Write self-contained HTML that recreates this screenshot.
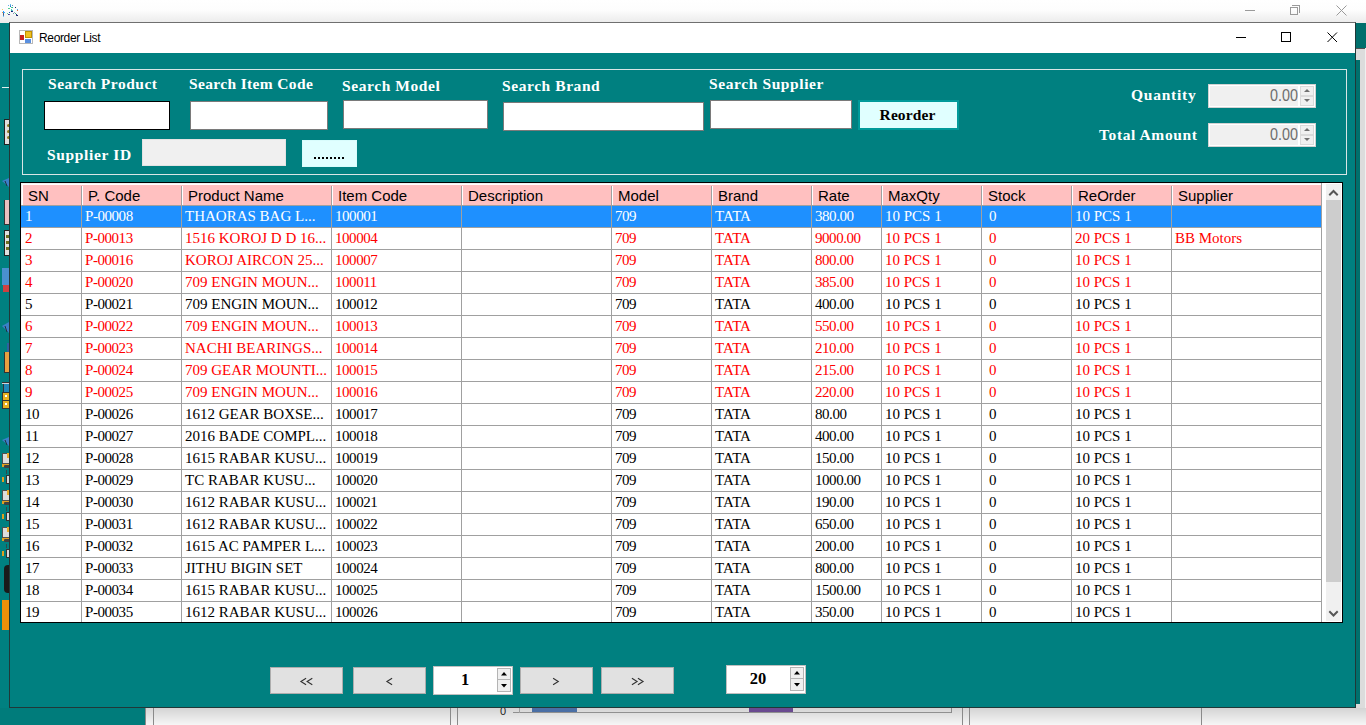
<!DOCTYPE html>
<html><head><meta charset="utf-8">
<style>
*{margin:0;padding:0;box-sizing:border-box}
html,body{width:1366px;height:725px;overflow:hidden;background:#fff;position:relative}
.a{position:absolute}
.lbl{position:absolute;font-family:"Liberation Serif",serif;font-weight:bold;color:#fff;font-size:15.5px;white-space:nowrap;line-height:1}
.hd{position:absolute;font-family:"Liberation Sans",sans-serif;font-size:15px;color:#000;white-space:nowrap;line-height:1}
.cell{position:absolute;font-family:"Liberation Serif",serif;font-size:15px;white-space:nowrap;line-height:1}
.btn{position:absolute;background:#e1e1e1;border:1px solid #adadad;font-family:"Liberation Sans",sans-serif;font-size:13px;color:#000;text-align:center}
</style></head><body>

<div class="a" style="left:0;top:0;width:1366px;height:23px;background:linear-gradient(#fff 0,#fdfdfd 10px,#ececec 22px)"></div>
<div class="a" style="left:2px;top:9px;width:1px;height:1px;background:#f0d070"></div>
<div class="a" style="left:2px;top:12px;width:1px;height:1px;background:#f09040"></div>
<div class="a" style="left:3px;top:11px;width:1px;height:1px;background:#20a0ff"></div>
<div class="a" style="left:3px;top:12px;width:1px;height:1px;background:#20a0ff"></div>
<div class="a" style="left:4px;top:12px;width:1px;height:1px;background:#40a8ff"></div>
<div class="a" style="left:3px;top:13px;width:1px;height:1px;background:#506080"></div>
<div class="a" style="left:3px;top:14px;width:1px;height:1px;background:#505878"></div>
<div class="a" style="left:3px;top:15px;width:1px;height:1px;background:#4080c0"></div>
<div class="a" style="left:3px;top:16px;width:1px;height:1px;background:#80c0f0"></div>
<div class="a" style="left:8px;top:5px;width:1px;height:1px;background:#60b0f0"></div>
<div class="a" style="left:10px;top:4px;width:1px;height:1px;background:#60c0e0"></div>
<div class="a" style="left:10px;top:5px;width:1px;height:1px;background:#50a0e0"></div>
<div class="a" style="left:10px;top:6px;width:1px;height:1px;background:#2070d0"></div>
<div class="a" style="left:11px;top:7px;width:1px;height:1px;background:#40d090"></div>
<div class="a" style="left:12px;top:7px;width:1px;height:1px;background:#30c080"></div>
<div class="a" style="left:12px;top:5px;width:1px;height:1px;background:#6090c0"></div>
<div class="a" style="left:15px;top:7px;width:1px;height:1px;background:#203070"></div>
<div class="a" style="left:8px;top:8px;width:1px;height:1px;background:#50d090"></div>
<div class="a" style="left:9px;top:8px;width:1px;height:1px;background:#50d090"></div>
<div class="a" style="left:11px;top:9px;width:1px;height:1px;background:#40d0b0"></div>
<div class="a" style="left:12px;top:10px;width:1px;height:1px;background:#60d0d0"></div>
<div class="a" style="left:11px;top:10px;width:1px;height:1px;background:#40b0b0"></div>
<div class="a" style="left:11px;top:11px;width:1px;height:1px;background:#102070"></div>
<div class="a" style="left:12px;top:11px;width:1px;height:1px;background:#203080"></div>
<div class="a" style="left:9px;top:12px;width:1px;height:1px;background:#2060b0"></div>
<div class="a" style="left:7px;top:13px;width:1px;height:1px;background:#60e0a0"></div>
<div class="a" style="left:8px;top:14px;width:1px;height:1px;background:#404890"></div>
<div class="a" style="left:9px;top:14px;width:1px;height:1px;background:#6050a0"></div>
<div class="a" style="left:13px;top:13px;width:1px;height:1px;background:#8090b0"></div>
<div class="a" style="left:14px;top:12px;width:1px;height:1px;background:#a0a8c0"></div>
<div class="a" style="left:15px;top:13px;width:1px;height:1px;background:#40c080"></div>
<div class="a" style="left:16px;top:14px;width:1px;height:1px;background:#203080"></div>
<div class="a" style="left:17px;top:15px;width:1px;height:1px;background:#102060"></div>
<div class="a" style="left:16px;top:15px;width:1px;height:1px;background:#304080"></div>
<div class="a" style="left:17px;top:9px;width:1px;height:1px;background:#60a8e0"></div>
<div class="a" style="left:17px;top:10px;width:1px;height:1px;background:#e07040"></div>
<div class="a" style="left:1245px;top:10px;width:10px;height:1px;background:#9a9a9a"></div>
<div class="a" style="left:1292px;top:5px;width:8px;height:8px;border:1px solid #9a9a9a;border-left:none;border-bottom:none"></div>
<div class="a" style="left:1290px;top:7px;width:8px;height:8px;border:1px solid #9a9a9a"></div>
<svg class="a" style="left:1336px;top:5px" width="11" height="11"><path d="M0.5 0.5L10.5 10.5M10.5 0.5L0.5 10.5" stroke="#9a9a9a" stroke-width="1"/></svg>
<div class="a" style="left:0;top:23px;width:10px;height:702px;background:#008080"></div>
<div class="a" style="left:2px;top:87px;width:7px;height:1px;background:#e0f0f0"></div>
<div class="a" style="left:4px;top:119px;width:6px;height:26px;background:#e0e0e0;border:1px solid #222;border-right:none"></div>
<div class="a" style="left:7px;top:124px;width:3px;height:3px;background:#8a7a20;border-radius:2px"></div>
<div class="a" style="left:7px;top:130px;width:3px;height:3px;background:#8a7a20;border-radius:2px"></div>
<div class="a" style="left:7px;top:136px;width:3px;height:3px;background:#8a7a20;border-radius:2px"></div>
<svg class="a" style="left:0;top:176px" width="10" height="12"><path d="M2 5 L9 2 L9 11 Z" fill="#3a80c8"/><path d="M5 5 L7 10" stroke="#203040" stroke-width="1"/></svg>
<div class="a" style="left:4px;top:200px;width:6px;height:25px;background:#e8c0c0;border-left:1px solid #333;border-bottom:1px solid #333"></div>
<div class="a" style="left:4px;top:230px;width:6px;height:26px;background:#e0e0e0;border:1px solid #222"></div>
<div class="a" style="left:6px;top:235px;width:3px;height:3px;background:#707020;"></div>
<div class="a" style="left:6px;top:241px;width:3px;height:3px;background:#707020;"></div>
<div class="a" style="left:6px;top:247px;width:3px;height:3px;background:#707020;"></div>
<div class="a" style="left:2px;top:268px;width:8px;height:17px;background:#4a90d0;"></div>
<div class="a" style="left:3px;top:285px;width:6px;height:7px;background:#d04040;"></div>
<svg class="a" style="left:0;top:320px" width="10" height="14"><path d="M2 6 L9 2 L9 13 Z" fill="#3a80c8"/><path d="M5 6 L7 12" stroke="#203040" stroke-width="1"/></svg>
<div class="a" style="left:7px;top:343px;width:3px;height:9px;background:#3060a0;"></div>
<div class="a" style="left:4px;top:352px;width:6px;height:21px;background:#e8a040;border-left:1px solid #333;border-bottom:1px solid #333"></div>
<div class="a" style="left:2px;top:382px;width:8px;height:2px;background:#d0d4d8;border-top:1px solid #333"></div>
<div class="a" style="left:3px;top:384px;width:7px;height:8px;background:#2088b8;border-left:1px solid #333"></div>
<div class="a" style="left:2px;top:392px;width:8px;height:17px;background:#e8b020;border:1px solid #333;border-right:none"></div>
<div class="a" style="left:2px;top:400px;width:8px;height:1px;background:#333;"></div>
<div class="a" style="left:5px;top:395px;width:2px;height:2px;background:#fff;"></div>
<div class="a" style="left:5px;top:403px;width:2px;height:2px;background:#fff;"></div>
<svg class="a" style="left:0;top:435px" width="10" height="12"><path d="M2 5 L9 2 L9 11 Z" fill="#3a80c8"/><path d="M5 5 L7 10" stroke="#203040" stroke-width="1"/></svg>
<div class="a" style="left:2px;top:453px;width:8px;height:11px;background:#dcdcdc;border:1px solid #505050;border-right:none"></div>
<div class="a" style="left:7px;top:453px;width:3px;height:5px;background:#e8a828;"></div>
<div class="a" style="left:2px;top:464px;width:8px;height:3px;background:#e0a020;"></div>
<div class="a" style="left:4px;top:465px;width:6px;height:3px;background:#404040;border-radius:1px"></div>
<div class="a" style="left:6px;top:470px;width:1px;height:4px;background:#304848;"></div>
<div class="a" style="left:6px;top:475px;width:4px;height:9px;background:#d8d8d8;border:1px solid #333;border-right:none"></div>
<div class="a" style="left:2px;top:477px;width:2px;height:5px;background:#e0a020;"></div>
<div class="a" style="left:2px;top:490px;width:8px;height:11px;background:#dcdcdc;border:1px solid #505050;border-right:none"></div>
<div class="a" style="left:7px;top:490px;width:3px;height:5px;background:#e8a828;"></div>
<div class="a" style="left:2px;top:501px;width:8px;height:3px;background:#e0a020;"></div>
<div class="a" style="left:4px;top:502px;width:6px;height:3px;background:#404040;border-radius:1px"></div>
<div class="a" style="left:6px;top:507px;width:1px;height:4px;background:#304848;"></div>
<div class="a" style="left:6px;top:512px;width:4px;height:9px;background:#d8d8d8;border:1px solid #333;border-right:none"></div>
<div class="a" style="left:2px;top:514px;width:2px;height:5px;background:#e0a020;"></div>
<div class="a" style="left:2px;top:527px;width:8px;height:11px;background:#dcdcdc;border:1px solid #505050;border-right:none"></div>
<div class="a" style="left:7px;top:527px;width:3px;height:5px;background:#e8a828;"></div>
<div class="a" style="left:2px;top:538px;width:8px;height:3px;background:#e0a020;"></div>
<div class="a" style="left:4px;top:539px;width:6px;height:3px;background:#404040;border-radius:1px"></div>
<div class="a" style="left:6px;top:544px;width:1px;height:4px;background:#304848;"></div>
<div class="a" style="left:6px;top:549px;width:4px;height:9px;background:#d8d8d8;border:1px solid #333;border-right:none"></div>
<div class="a" style="left:2px;top:551px;width:2px;height:5px;background:#e0a020;"></div>
<div class="a" style="left:4px;top:565px;width:6px;height:28px;background:#1a1a1a;border-radius:4px 0 0 4px"></div>
<div class="a" style="left:2px;top:600px;width:8px;height:30px;background:#f0900a;"></div>
<div class="a" style="left:1355px;top:23px;width:11px;height:25px;background:#006f6c;"></div>
<div class="a" style="left:1355px;top:48px;width:11px;height:677px;background:#dcdcdc;"></div>
<div class="a" style="left:1356px;top:48px;width:10px;height:1px;background:#505050;"></div>
<div class="a" style="left:1365px;top:48px;width:1px;height:677px;background:#f0f0f0;"></div>
<div class="a" style="left:1355px;top:60px;width:5px;height:644px;background:#00706d;"></div>
<div class="a" style="left:0px;top:708px;width:145px;height:17px;background:#007c7b;"></div>
<div class="a" style="left:145px;top:708px;width:1221px;height:17px;background:#f0f0f0;background:linear-gradient(#d4d4d4,#f6f6f6)"></div>
<div class="a" style="left:145px;top:708px;width:1px;height:17px;background:#8a8a8a;"></div>
<div class="a" style="left:153px;top:708px;width:1px;height:17px;background:#8a8a8a;"></div>
<div class="a" style="left:450px;top:708px;width:1px;height:17px;background:#8a8a8a;"></div>
<div class="a" style="left:457px;top:708px;width:1px;height:17px;background:#8a8a8a;"></div>
<div class="a" style="left:500px;top:705px;font-family:'Liberation Sans',sans-serif;font-size:11px;line-height:13px;color:#222">0</div>
<div class="a" style="left:513px;top:712px;width:439px;height:1px;background:#909090;"></div>
<div class="a" style="left:519px;top:708px;width:1px;height:5px;background:#a0a0a0;"></div>
<div class="a" style="left:532px;top:708px;width:45px;height:4px;background:#4a6fa5;"></div>
<div class="a" style="left:749px;top:708px;width:44px;height:4px;background:#6a4a90;"></div>
<div class="a" style="left:951px;top:708px;width:1px;height:5px;background:#8a8a8a;"></div>
<div class="a" style="left:962px;top:708px;width:1px;height:17px;background:#8a8a8a;"></div>
<div class="a" style="left:969px;top:708px;width:1px;height:17px;background:#8a8a8a;"></div>
<div class="a" style="left:1201px;top:708px;width:1px;height:17px;background:#8a8a8a;"></div>
<div class="a" style="left:9px;top:22px;width:1347px;height:686px;background:#008080;border:1px solid #203838;border-top-color:#6f6f6f"></div>
<div class="a" style="left:10px;top:23px;width:1345px;height:30px;background:#fff;"></div>
<div class="a" style="left:19px;top:30px;width:14px;height:14px;background:#fff;border:1px solid #b8b8b8"></div>
<div class="a" style="left:25px;top:31px;width:7px;height:7px;background:#f0c020;border:1px solid #c09000"></div>
<div class="a" style="left:20px;top:35px;width:4px;height:5px;background:#c82020;"></div>
<div class="a" style="left:25px;top:39px;width:6px;height:4px;background:#5a90e0;"></div>
<div class="a" style="left:39px;top:31px;font-family:'Liberation Sans',sans-serif;font-size:12px;letter-spacing:-0.35px;color:#000;line-height:15px">Reorder List</div>
<div class="a" style="left:1236px;top:37px;width:10px;height:1px;background:#000;"></div>
<div class="a" style="left:1281px;top:32px;width:10px;height:10px;background:transparent;border:1px solid #000"></div>
<svg class="a" style="left:1327px;top:32px" width="11" height="11"><path d="M0.5 0.5L10 10M10 0.5L0.5 10" stroke="#000" stroke-width="1"/></svg>
<div class="a" style="left:22px;top:69px;width:1325px;height:106px;border:1px solid #d8e6e6"></div>
<div class="lbl" style="left:48px;top:76px;letter-spacing:0.515px">Search Product</div>
<div class="lbl" style="left:189px;top:76px;letter-spacing:0.353px">Search Item Code</div>
<div class="lbl" style="left:342px;top:78px;letter-spacing:0.582px">Search Model</div>
<div class="lbl" style="left:502px;top:78px;letter-spacing:0.573px">Search Brand</div>
<div class="lbl" style="left:709px;top:76px;letter-spacing:0.6px">Search Supplier</div>
<div class="lbl" style="left:47px;top:147px;letter-spacing:0.65px">Supplier ID</div>
<div class="lbl" style="left:1131px;top:87px;letter-spacing:0.75px">Quantity</div>
<div class="lbl" style="left:1099px;top:127px;letter-spacing:0.609px">Total Amount</div>
<div class="a" style="left:44px;top:101px;width:126px;height:29px;background:#fff;border:1px solid #000"></div>
<div class="a" style="left:190px;top:101px;width:138px;height:29px;background:#fff;border:1px solid #7a7a7a"></div>
<div class="a" style="left:343px;top:100px;width:145px;height:29px;background:#fff;border:1px solid #7a7a7a"></div>
<div class="a" style="left:503px;top:102px;width:201px;height:29px;background:#fff;border:1px solid #7a7a7a"></div>
<div class="a" style="left:710px;top:100px;width:142px;height:29px;background:#fff;border:1px solid #7a7a7a"></div>
<div class="a" style="left:142px;top:139px;width:144px;height:27px;background:#f0f0f0;border:1px solid #e3e3e3"></div>
<div class="a" style="left:302px;top:140px;width:55px;height:27px;background:#e0ffff;border:1px solid #d8fcfc"></div>
<div class="a" style="left:314px;top:157px;width:2px;height:2px;background:#000;"></div>
<div class="a" style="left:318px;top:157px;width:2px;height:2px;background:#000;"></div>
<div class="a" style="left:322px;top:157px;width:2px;height:2px;background:#000;"></div>
<div class="a" style="left:326px;top:157px;width:2px;height:2px;background:#000;"></div>
<div class="a" style="left:330px;top:157px;width:2px;height:2px;background:#000;"></div>
<div class="a" style="left:334px;top:157px;width:2px;height:2px;background:#000;"></div>
<div class="a" style="left:338px;top:157px;width:2px;height:2px;background:#000;"></div>
<div class="a" style="left:342px;top:157px;width:2px;height:2px;background:#000;"></div>
<div class="a" style="left:858px;top:100px;width:101px;height:30px;background:#e0ffff;border:2px solid #009a9a"></div>
<div class="a" style="left:857px;top:105px;width:101px;text-align:center;font-family:'Liberation Serif',serif;font-weight:bold;font-size:15.5px;letter-spacing:0.1px;color:#000;line-height:20px">Reorder</div>
<div class="a" style="left:1208px;top:84px;width:108px;height:24px;background:#fff;border:1px solid #d2d2d2"></div>
<div class="a" style="left:1210px;top:86px;width:88px;height:20px;background:#f0f0f0;"></div>
<div class="a" style="left:1198px;top:86px;width:100px;text-align:right;font-family:'Liberation Sans',sans-serif;font-size:16.5px;color:#6d6d6d;line-height:18px;transform:scaleX(0.87);transform-origin:right center">0.00</div>
<div class="a" style="left:1300px;top:86px;width:14px;height:10px;background:#f0f0f0;border:1px solid #dadada"></div>
<div class="a" style="left:1300px;top:96px;width:14px;height:10px;background:#f0f0f0;border:1px solid #dadada"></div>
<svg class="a" style="left:1304px;top:89px" width="6" height="3"><path d="M3 0L6 3H0Z" fill="#707070"/></svg>
<svg class="a" style="left:1304px;top:99px" width="6" height="3"><path d="M0 0H6L3 3Z" fill="#707070"/></svg>
<div class="a" style="left:1208px;top:123px;width:108px;height:24px;background:#fff;border:1px solid #d2d2d2"></div>
<div class="a" style="left:1210px;top:125px;width:88px;height:20px;background:#f0f0f0;"></div>
<div class="a" style="left:1198px;top:125px;width:100px;text-align:right;font-family:'Liberation Sans',sans-serif;font-size:16.5px;color:#6d6d6d;line-height:18px;transform:scaleX(0.87);transform-origin:right center">0.00</div>
<div class="a" style="left:1300px;top:125px;width:14px;height:10px;background:#f0f0f0;border:1px solid #dadada"></div>
<div class="a" style="left:1300px;top:135px;width:14px;height:10px;background:#f0f0f0;border:1px solid #dadada"></div>
<svg class="a" style="left:1304px;top:128px" width="6" height="3"><path d="M3 0L6 3H0Z" fill="#707070"/></svg>
<svg class="a" style="left:1304px;top:138px" width="6" height="3"><path d="M0 0H6L3 3Z" fill="#707070"/></svg>
<div class="a" style="left:20px;top:182px;width:1323px;height:441px;background:#fff;border:1px solid #000"></div>
<div class="a" style="left:21px;top:183px;width:1300px;height:22px;background:#ffc0c0;border-top:2px solid #fff;border-left:2px solid #fff"></div>
<div class="a" style="left:21px;top:183px;width:1300px;height:1px;background:#f0f0f0;"></div>
<div class="a" style="left:21px;top:183px;width:1px;height:22px;background:#f0f0f0;"></div>
<div class="a" style="left:81px;top:186px;width:1px;height:19px;background:#a0a0a0;"></div>
<div class="a" style="left:82px;top:186px;width:1px;height:19px;background:#fff;"></div>
<div class="a" style="left:181px;top:186px;width:1px;height:19px;background:#a0a0a0;"></div>
<div class="a" style="left:182px;top:186px;width:1px;height:19px;background:#fff;"></div>
<div class="a" style="left:331px;top:186px;width:1px;height:19px;background:#a0a0a0;"></div>
<div class="a" style="left:332px;top:186px;width:1px;height:19px;background:#fff;"></div>
<div class="a" style="left:461px;top:186px;width:1px;height:19px;background:#a0a0a0;"></div>
<div class="a" style="left:462px;top:186px;width:1px;height:19px;background:#fff;"></div>
<div class="a" style="left:611px;top:186px;width:1px;height:19px;background:#a0a0a0;"></div>
<div class="a" style="left:612px;top:186px;width:1px;height:19px;background:#fff;"></div>
<div class="a" style="left:711px;top:186px;width:1px;height:19px;background:#a0a0a0;"></div>
<div class="a" style="left:712px;top:186px;width:1px;height:19px;background:#fff;"></div>
<div class="a" style="left:811px;top:186px;width:1px;height:19px;background:#a0a0a0;"></div>
<div class="a" style="left:812px;top:186px;width:1px;height:19px;background:#fff;"></div>
<div class="a" style="left:881px;top:186px;width:1px;height:19px;background:#a0a0a0;"></div>
<div class="a" style="left:882px;top:186px;width:1px;height:19px;background:#fff;"></div>
<div class="a" style="left:981px;top:186px;width:1px;height:19px;background:#a0a0a0;"></div>
<div class="a" style="left:982px;top:186px;width:1px;height:19px;background:#fff;"></div>
<div class="a" style="left:1071px;top:186px;width:1px;height:19px;background:#a0a0a0;"></div>
<div class="a" style="left:1072px;top:186px;width:1px;height:19px;background:#fff;"></div>
<div class="a" style="left:1171px;top:186px;width:1px;height:19px;background:#a0a0a0;"></div>
<div class="a" style="left:1172px;top:186px;width:1px;height:19px;background:#fff;"></div>
<div class="a" style="left:21px;top:205px;width:1300px;height:1px;background:#a0a0a0;"></div>
<div class="hd" style="left:28px;top:188px">SN</div>
<div class="hd" style="left:88px;top:188px">P. Code</div>
<div class="hd" style="left:188px;top:188px">Product Name</div>
<div class="hd" style="left:338px;top:188px">Item Code</div>
<div class="hd" style="left:468px;top:188px">Description</div>
<div class="hd" style="left:618px;top:188px">Model</div>
<div class="hd" style="left:718px;top:188px">Brand</div>
<div class="hd" style="left:818px;top:188px">Rate</div>
<div class="hd" style="left:888px;top:188px">MaxQty</div>
<div class="hd" style="left:988px;top:188px">Stock</div>
<div class="hd" style="left:1078px;top:188px">ReOrder</div>
<div class="hd" style="left:1178px;top:188px">Supplier</div>
<div class="a" style="left:21px;top:206px;width:1300px;height:21px;background:#1e90ff;"></div>
<div class="a" style="left:21px;top:227px;width:1300px;height:1px;background:#a0a0a0;"></div>
<div class="cell" style="left:25px;top:209px;color:#fff;letter-spacing:-0.45px">1</div>
<div class="cell" style="left:85px;top:209px;color:#fff;letter-spacing:-0.45px">P-00008</div>
<div class="cell" style="left:185px;top:209px;color:#fff;letter-spacing:0px">THAORAS BAG L...</div>
<div class="cell" style="left:335px;top:209px;color:#fff;letter-spacing:-0.45px">100001</div>
<div class="cell" style="left:615px;top:209px;color:#fff;letter-spacing:-0.45px">709</div>
<div class="cell" style="left:715px;top:209px;color:#fff;letter-spacing:0px">TATA</div>
<div class="cell" style="left:815px;top:209px;color:#fff;letter-spacing:-0.45px">380.00</div>
<div class="cell" style="left:885px;top:209px;color:#fff;letter-spacing:0px">10 PCS 1</div>
<div class="cell" style="left:989px;top:209px;color:#fff;letter-spacing:-0.45px">0</div>
<div class="cell" style="left:1075px;top:209px;color:#fff;letter-spacing:0px">10 PCS 1</div>
<div class="a" style="left:21px;top:249px;width:1300px;height:1px;background:#a0a0a0;"></div>
<div class="cell" style="left:25px;top:231px;color:#ff0000;letter-spacing:-0.45px">2</div>
<div class="cell" style="left:85px;top:231px;color:#ff0000;letter-spacing:-0.45px">P-00013</div>
<div class="cell" style="left:185px;top:231px;color:#ff0000;letter-spacing:0px">1516 KOROJ D D 16...</div>
<div class="cell" style="left:335px;top:231px;color:#ff0000;letter-spacing:-0.45px">100004</div>
<div class="cell" style="left:615px;top:231px;color:#ff0000;letter-spacing:-0.45px">709</div>
<div class="cell" style="left:715px;top:231px;color:#ff0000;letter-spacing:0px">TATA</div>
<div class="cell" style="left:815px;top:231px;color:#ff0000;letter-spacing:-0.45px">9000.00</div>
<div class="cell" style="left:885px;top:231px;color:#ff0000;letter-spacing:0px">10 PCS 1</div>
<div class="cell" style="left:989px;top:231px;color:#ff0000;letter-spacing:-0.45px">0</div>
<div class="cell" style="left:1075px;top:231px;color:#ff0000;letter-spacing:0px">20 PCS 1</div>
<div class="cell" style="left:1175px;top:231px;color:#ff0000;letter-spacing:0px">BB Motors</div>
<div class="a" style="left:21px;top:271px;width:1300px;height:1px;background:#a0a0a0;"></div>
<div class="cell" style="left:25px;top:253px;color:#ff0000;letter-spacing:-0.45px">3</div>
<div class="cell" style="left:85px;top:253px;color:#ff0000;letter-spacing:-0.45px">P-00016</div>
<div class="cell" style="left:185px;top:253px;color:#ff0000;letter-spacing:0px">KOROJ AIRCON 25...</div>
<div class="cell" style="left:335px;top:253px;color:#ff0000;letter-spacing:-0.45px">100007</div>
<div class="cell" style="left:615px;top:253px;color:#ff0000;letter-spacing:-0.45px">709</div>
<div class="cell" style="left:715px;top:253px;color:#ff0000;letter-spacing:0px">TATA</div>
<div class="cell" style="left:815px;top:253px;color:#ff0000;letter-spacing:-0.45px">800.00</div>
<div class="cell" style="left:885px;top:253px;color:#ff0000;letter-spacing:0px">10 PCS 1</div>
<div class="cell" style="left:989px;top:253px;color:#ff0000;letter-spacing:-0.45px">0</div>
<div class="cell" style="left:1075px;top:253px;color:#ff0000;letter-spacing:0px">10 PCS 1</div>
<div class="a" style="left:21px;top:293px;width:1300px;height:1px;background:#a0a0a0;"></div>
<div class="cell" style="left:25px;top:275px;color:#ff0000;letter-spacing:-0.45px">4</div>
<div class="cell" style="left:85px;top:275px;color:#ff0000;letter-spacing:-0.45px">P-00020</div>
<div class="cell" style="left:185px;top:275px;color:#ff0000;letter-spacing:0px">709 ENGIN MOUN...</div>
<div class="cell" style="left:335px;top:275px;color:#ff0000;letter-spacing:-0.45px">100011</div>
<div class="cell" style="left:615px;top:275px;color:#ff0000;letter-spacing:-0.45px">709</div>
<div class="cell" style="left:715px;top:275px;color:#ff0000;letter-spacing:0px">TATA</div>
<div class="cell" style="left:815px;top:275px;color:#ff0000;letter-spacing:-0.45px">385.00</div>
<div class="cell" style="left:885px;top:275px;color:#ff0000;letter-spacing:0px">10 PCS 1</div>
<div class="cell" style="left:989px;top:275px;color:#ff0000;letter-spacing:-0.45px">0</div>
<div class="cell" style="left:1075px;top:275px;color:#ff0000;letter-spacing:0px">10 PCS 1</div>
<div class="a" style="left:21px;top:315px;width:1300px;height:1px;background:#a0a0a0;"></div>
<div class="cell" style="left:25px;top:297px;color:#000;letter-spacing:-0.45px">5</div>
<div class="cell" style="left:85px;top:297px;color:#000;letter-spacing:-0.45px">P-00021</div>
<div class="cell" style="left:185px;top:297px;color:#000;letter-spacing:0px">709 ENGIN MOUN...</div>
<div class="cell" style="left:335px;top:297px;color:#000;letter-spacing:-0.45px">100012</div>
<div class="cell" style="left:615px;top:297px;color:#000;letter-spacing:-0.45px">709</div>
<div class="cell" style="left:715px;top:297px;color:#000;letter-spacing:0px">TATA</div>
<div class="cell" style="left:815px;top:297px;color:#000;letter-spacing:-0.45px">400.00</div>
<div class="cell" style="left:885px;top:297px;color:#000;letter-spacing:0px">10 PCS 1</div>
<div class="cell" style="left:989px;top:297px;color:#000;letter-spacing:-0.45px">0</div>
<div class="cell" style="left:1075px;top:297px;color:#000;letter-spacing:0px">10 PCS 1</div>
<div class="a" style="left:21px;top:337px;width:1300px;height:1px;background:#a0a0a0;"></div>
<div class="cell" style="left:25px;top:319px;color:#ff0000;letter-spacing:-0.45px">6</div>
<div class="cell" style="left:85px;top:319px;color:#ff0000;letter-spacing:-0.45px">P-00022</div>
<div class="cell" style="left:185px;top:319px;color:#ff0000;letter-spacing:0px">709 ENGIN MOUN...</div>
<div class="cell" style="left:335px;top:319px;color:#ff0000;letter-spacing:-0.45px">100013</div>
<div class="cell" style="left:615px;top:319px;color:#ff0000;letter-spacing:-0.45px">709</div>
<div class="cell" style="left:715px;top:319px;color:#ff0000;letter-spacing:0px">TATA</div>
<div class="cell" style="left:815px;top:319px;color:#ff0000;letter-spacing:-0.45px">550.00</div>
<div class="cell" style="left:885px;top:319px;color:#ff0000;letter-spacing:0px">10 PCS 1</div>
<div class="cell" style="left:989px;top:319px;color:#ff0000;letter-spacing:-0.45px">0</div>
<div class="cell" style="left:1075px;top:319px;color:#ff0000;letter-spacing:0px">10 PCS 1</div>
<div class="a" style="left:21px;top:359px;width:1300px;height:1px;background:#a0a0a0;"></div>
<div class="cell" style="left:25px;top:341px;color:#ff0000;letter-spacing:-0.45px">7</div>
<div class="cell" style="left:85px;top:341px;color:#ff0000;letter-spacing:-0.45px">P-00023</div>
<div class="cell" style="left:185px;top:341px;color:#ff0000;letter-spacing:0px">NACHI BEARINGS...</div>
<div class="cell" style="left:335px;top:341px;color:#ff0000;letter-spacing:-0.45px">100014</div>
<div class="cell" style="left:615px;top:341px;color:#ff0000;letter-spacing:-0.45px">709</div>
<div class="cell" style="left:715px;top:341px;color:#ff0000;letter-spacing:0px">TATA</div>
<div class="cell" style="left:815px;top:341px;color:#ff0000;letter-spacing:-0.45px">210.00</div>
<div class="cell" style="left:885px;top:341px;color:#ff0000;letter-spacing:0px">10 PCS 1</div>
<div class="cell" style="left:989px;top:341px;color:#ff0000;letter-spacing:-0.45px">0</div>
<div class="cell" style="left:1075px;top:341px;color:#ff0000;letter-spacing:0px">10 PCS 1</div>
<div class="a" style="left:21px;top:381px;width:1300px;height:1px;background:#a0a0a0;"></div>
<div class="cell" style="left:25px;top:363px;color:#ff0000;letter-spacing:-0.45px">8</div>
<div class="cell" style="left:85px;top:363px;color:#ff0000;letter-spacing:-0.45px">P-00024</div>
<div class="cell" style="left:185px;top:363px;color:#ff0000;letter-spacing:0px">709 GEAR MOUNTI...</div>
<div class="cell" style="left:335px;top:363px;color:#ff0000;letter-spacing:-0.45px">100015</div>
<div class="cell" style="left:615px;top:363px;color:#ff0000;letter-spacing:-0.45px">709</div>
<div class="cell" style="left:715px;top:363px;color:#ff0000;letter-spacing:0px">TATA</div>
<div class="cell" style="left:815px;top:363px;color:#ff0000;letter-spacing:-0.45px">215.00</div>
<div class="cell" style="left:885px;top:363px;color:#ff0000;letter-spacing:0px">10 PCS 1</div>
<div class="cell" style="left:989px;top:363px;color:#ff0000;letter-spacing:-0.45px">0</div>
<div class="cell" style="left:1075px;top:363px;color:#ff0000;letter-spacing:0px">10 PCS 1</div>
<div class="a" style="left:21px;top:403px;width:1300px;height:1px;background:#a0a0a0;"></div>
<div class="cell" style="left:25px;top:385px;color:#ff0000;letter-spacing:-0.45px">9</div>
<div class="cell" style="left:85px;top:385px;color:#ff0000;letter-spacing:-0.45px">P-00025</div>
<div class="cell" style="left:185px;top:385px;color:#ff0000;letter-spacing:0px">709 ENGIN MOUN...</div>
<div class="cell" style="left:335px;top:385px;color:#ff0000;letter-spacing:-0.45px">100016</div>
<div class="cell" style="left:615px;top:385px;color:#ff0000;letter-spacing:-0.45px">709</div>
<div class="cell" style="left:715px;top:385px;color:#ff0000;letter-spacing:0px">TATA</div>
<div class="cell" style="left:815px;top:385px;color:#ff0000;letter-spacing:-0.45px">220.00</div>
<div class="cell" style="left:885px;top:385px;color:#ff0000;letter-spacing:0px">10 PCS 1</div>
<div class="cell" style="left:989px;top:385px;color:#ff0000;letter-spacing:-0.45px">0</div>
<div class="cell" style="left:1075px;top:385px;color:#ff0000;letter-spacing:0px">10 PCS 1</div>
<div class="a" style="left:21px;top:425px;width:1300px;height:1px;background:#a0a0a0;"></div>
<div class="cell" style="left:25px;top:407px;color:#000;letter-spacing:-0.45px">10</div>
<div class="cell" style="left:85px;top:407px;color:#000;letter-spacing:-0.45px">P-00026</div>
<div class="cell" style="left:185px;top:407px;color:#000;letter-spacing:0px">1612 GEAR BOXSE...</div>
<div class="cell" style="left:335px;top:407px;color:#000;letter-spacing:-0.45px">100017</div>
<div class="cell" style="left:615px;top:407px;color:#000;letter-spacing:-0.45px">709</div>
<div class="cell" style="left:715px;top:407px;color:#000;letter-spacing:0px">TATA</div>
<div class="cell" style="left:815px;top:407px;color:#000;letter-spacing:-0.45px">80.00</div>
<div class="cell" style="left:885px;top:407px;color:#000;letter-spacing:0px">10 PCS 1</div>
<div class="cell" style="left:989px;top:407px;color:#000;letter-spacing:-0.45px">0</div>
<div class="cell" style="left:1075px;top:407px;color:#000;letter-spacing:0px">10 PCS 1</div>
<div class="a" style="left:21px;top:447px;width:1300px;height:1px;background:#a0a0a0;"></div>
<div class="cell" style="left:25px;top:429px;color:#000;letter-spacing:-0.45px">11</div>
<div class="cell" style="left:85px;top:429px;color:#000;letter-spacing:-0.45px">P-00027</div>
<div class="cell" style="left:185px;top:429px;color:#000;letter-spacing:0px">2016 BADE COMPL...</div>
<div class="cell" style="left:335px;top:429px;color:#000;letter-spacing:-0.45px">100018</div>
<div class="cell" style="left:615px;top:429px;color:#000;letter-spacing:-0.45px">709</div>
<div class="cell" style="left:715px;top:429px;color:#000;letter-spacing:0px">TATA</div>
<div class="cell" style="left:815px;top:429px;color:#000;letter-spacing:-0.45px">400.00</div>
<div class="cell" style="left:885px;top:429px;color:#000;letter-spacing:0px">10 PCS 1</div>
<div class="cell" style="left:989px;top:429px;color:#000;letter-spacing:-0.45px">0</div>
<div class="cell" style="left:1075px;top:429px;color:#000;letter-spacing:0px">10 PCS 1</div>
<div class="a" style="left:21px;top:469px;width:1300px;height:1px;background:#a0a0a0;"></div>
<div class="cell" style="left:25px;top:451px;color:#000;letter-spacing:-0.45px">12</div>
<div class="cell" style="left:85px;top:451px;color:#000;letter-spacing:-0.45px">P-00028</div>
<div class="cell" style="left:185px;top:451px;color:#000;letter-spacing:0px">1615 RABAR KUSU...</div>
<div class="cell" style="left:335px;top:451px;color:#000;letter-spacing:-0.45px">100019</div>
<div class="cell" style="left:615px;top:451px;color:#000;letter-spacing:-0.45px">709</div>
<div class="cell" style="left:715px;top:451px;color:#000;letter-spacing:0px">TATA</div>
<div class="cell" style="left:815px;top:451px;color:#000;letter-spacing:-0.45px">150.00</div>
<div class="cell" style="left:885px;top:451px;color:#000;letter-spacing:0px">10 PCS 1</div>
<div class="cell" style="left:989px;top:451px;color:#000;letter-spacing:-0.45px">0</div>
<div class="cell" style="left:1075px;top:451px;color:#000;letter-spacing:0px">10 PCS 1</div>
<div class="a" style="left:21px;top:491px;width:1300px;height:1px;background:#a0a0a0;"></div>
<div class="cell" style="left:25px;top:473px;color:#000;letter-spacing:-0.45px">13</div>
<div class="cell" style="left:85px;top:473px;color:#000;letter-spacing:-0.45px">P-00029</div>
<div class="cell" style="left:185px;top:473px;color:#000;letter-spacing:0px">TC RABAR KUSU...</div>
<div class="cell" style="left:335px;top:473px;color:#000;letter-spacing:-0.45px">100020</div>
<div class="cell" style="left:615px;top:473px;color:#000;letter-spacing:-0.45px">709</div>
<div class="cell" style="left:715px;top:473px;color:#000;letter-spacing:0px">TATA</div>
<div class="cell" style="left:815px;top:473px;color:#000;letter-spacing:-0.45px">1000.00</div>
<div class="cell" style="left:885px;top:473px;color:#000;letter-spacing:0px">10 PCS 1</div>
<div class="cell" style="left:989px;top:473px;color:#000;letter-spacing:-0.45px">0</div>
<div class="cell" style="left:1075px;top:473px;color:#000;letter-spacing:0px">10 PCS 1</div>
<div class="a" style="left:21px;top:513px;width:1300px;height:1px;background:#a0a0a0;"></div>
<div class="cell" style="left:25px;top:495px;color:#000;letter-spacing:-0.45px">14</div>
<div class="cell" style="left:85px;top:495px;color:#000;letter-spacing:-0.45px">P-00030</div>
<div class="cell" style="left:185px;top:495px;color:#000;letter-spacing:0px">1612 RABAR KUSU...</div>
<div class="cell" style="left:335px;top:495px;color:#000;letter-spacing:-0.45px">100021</div>
<div class="cell" style="left:615px;top:495px;color:#000;letter-spacing:-0.45px">709</div>
<div class="cell" style="left:715px;top:495px;color:#000;letter-spacing:0px">TATA</div>
<div class="cell" style="left:815px;top:495px;color:#000;letter-spacing:-0.45px">190.00</div>
<div class="cell" style="left:885px;top:495px;color:#000;letter-spacing:0px">10 PCS 1</div>
<div class="cell" style="left:989px;top:495px;color:#000;letter-spacing:-0.45px">0</div>
<div class="cell" style="left:1075px;top:495px;color:#000;letter-spacing:0px">10 PCS 1</div>
<div class="a" style="left:21px;top:535px;width:1300px;height:1px;background:#a0a0a0;"></div>
<div class="cell" style="left:25px;top:517px;color:#000;letter-spacing:-0.45px">15</div>
<div class="cell" style="left:85px;top:517px;color:#000;letter-spacing:-0.45px">P-00031</div>
<div class="cell" style="left:185px;top:517px;color:#000;letter-spacing:0px">1612 RABAR KUSU...</div>
<div class="cell" style="left:335px;top:517px;color:#000;letter-spacing:-0.45px">100022</div>
<div class="cell" style="left:615px;top:517px;color:#000;letter-spacing:-0.45px">709</div>
<div class="cell" style="left:715px;top:517px;color:#000;letter-spacing:0px">TATA</div>
<div class="cell" style="left:815px;top:517px;color:#000;letter-spacing:-0.45px">650.00</div>
<div class="cell" style="left:885px;top:517px;color:#000;letter-spacing:0px">10 PCS 1</div>
<div class="cell" style="left:989px;top:517px;color:#000;letter-spacing:-0.45px">0</div>
<div class="cell" style="left:1075px;top:517px;color:#000;letter-spacing:0px">10 PCS 1</div>
<div class="a" style="left:21px;top:557px;width:1300px;height:1px;background:#a0a0a0;"></div>
<div class="cell" style="left:25px;top:539px;color:#000;letter-spacing:-0.45px">16</div>
<div class="cell" style="left:85px;top:539px;color:#000;letter-spacing:-0.45px">P-00032</div>
<div class="cell" style="left:185px;top:539px;color:#000;letter-spacing:0px">1615 AC PAMPER L...</div>
<div class="cell" style="left:335px;top:539px;color:#000;letter-spacing:-0.45px">100023</div>
<div class="cell" style="left:615px;top:539px;color:#000;letter-spacing:-0.45px">709</div>
<div class="cell" style="left:715px;top:539px;color:#000;letter-spacing:0px">TATA</div>
<div class="cell" style="left:815px;top:539px;color:#000;letter-spacing:-0.45px">200.00</div>
<div class="cell" style="left:885px;top:539px;color:#000;letter-spacing:0px">10 PCS 1</div>
<div class="cell" style="left:989px;top:539px;color:#000;letter-spacing:-0.45px">0</div>
<div class="cell" style="left:1075px;top:539px;color:#000;letter-spacing:0px">10 PCS 1</div>
<div class="a" style="left:21px;top:579px;width:1300px;height:1px;background:#a0a0a0;"></div>
<div class="cell" style="left:25px;top:561px;color:#000;letter-spacing:-0.45px">17</div>
<div class="cell" style="left:85px;top:561px;color:#000;letter-spacing:-0.45px">P-00033</div>
<div class="cell" style="left:185px;top:561px;color:#000;letter-spacing:0px">JITHU BIGIN SET</div>
<div class="cell" style="left:335px;top:561px;color:#000;letter-spacing:-0.45px">100024</div>
<div class="cell" style="left:615px;top:561px;color:#000;letter-spacing:-0.45px">709</div>
<div class="cell" style="left:715px;top:561px;color:#000;letter-spacing:0px">TATA</div>
<div class="cell" style="left:815px;top:561px;color:#000;letter-spacing:-0.45px">800.00</div>
<div class="cell" style="left:885px;top:561px;color:#000;letter-spacing:0px">10 PCS 1</div>
<div class="cell" style="left:989px;top:561px;color:#000;letter-spacing:-0.45px">0</div>
<div class="cell" style="left:1075px;top:561px;color:#000;letter-spacing:0px">10 PCS 1</div>
<div class="a" style="left:21px;top:601px;width:1300px;height:1px;background:#a0a0a0;"></div>
<div class="cell" style="left:25px;top:583px;color:#000;letter-spacing:-0.45px">18</div>
<div class="cell" style="left:85px;top:583px;color:#000;letter-spacing:-0.45px">P-00034</div>
<div class="cell" style="left:185px;top:583px;color:#000;letter-spacing:0px">1615 RABAR KUSU...</div>
<div class="cell" style="left:335px;top:583px;color:#000;letter-spacing:-0.45px">100025</div>
<div class="cell" style="left:615px;top:583px;color:#000;letter-spacing:-0.45px">709</div>
<div class="cell" style="left:715px;top:583px;color:#000;letter-spacing:0px">TATA</div>
<div class="cell" style="left:815px;top:583px;color:#000;letter-spacing:-0.45px">1500.00</div>
<div class="cell" style="left:885px;top:583px;color:#000;letter-spacing:0px">10 PCS 1</div>
<div class="cell" style="left:989px;top:583px;color:#000;letter-spacing:-0.45px">0</div>
<div class="cell" style="left:1075px;top:583px;color:#000;letter-spacing:0px">10 PCS 1</div>
<div class="cell" style="left:25px;top:605px;color:#000;letter-spacing:-0.45px">19</div>
<div class="cell" style="left:85px;top:605px;color:#000;letter-spacing:-0.45px">P-00035</div>
<div class="cell" style="left:185px;top:605px;color:#000;letter-spacing:0px">1612 RABAR KUSU...</div>
<div class="cell" style="left:335px;top:605px;color:#000;letter-spacing:-0.45px">100026</div>
<div class="cell" style="left:615px;top:605px;color:#000;letter-spacing:-0.45px">709</div>
<div class="cell" style="left:715px;top:605px;color:#000;letter-spacing:0px">TATA</div>
<div class="cell" style="left:815px;top:605px;color:#000;letter-spacing:-0.45px">350.00</div>
<div class="cell" style="left:885px;top:605px;color:#000;letter-spacing:0px">10 PCS 1</div>
<div class="cell" style="left:989px;top:605px;color:#000;letter-spacing:-0.45px">0</div>
<div class="cell" style="left:1075px;top:605px;color:#000;letter-spacing:0px">10 PCS 1</div>
<div class="a" style="left:81px;top:206px;width:1px;height:416px;background:#a0a0a0;"></div>
<div class="a" style="left:181px;top:206px;width:1px;height:416px;background:#a0a0a0;"></div>
<div class="a" style="left:331px;top:206px;width:1px;height:416px;background:#a0a0a0;"></div>
<div class="a" style="left:461px;top:206px;width:1px;height:416px;background:#a0a0a0;"></div>
<div class="a" style="left:611px;top:206px;width:1px;height:416px;background:#a0a0a0;"></div>
<div class="a" style="left:711px;top:206px;width:1px;height:416px;background:#a0a0a0;"></div>
<div class="a" style="left:811px;top:206px;width:1px;height:416px;background:#a0a0a0;"></div>
<div class="a" style="left:881px;top:206px;width:1px;height:416px;background:#a0a0a0;"></div>
<div class="a" style="left:981px;top:206px;width:1px;height:416px;background:#a0a0a0;"></div>
<div class="a" style="left:1071px;top:206px;width:1px;height:416px;background:#a0a0a0;"></div>
<div class="a" style="left:1171px;top:206px;width:1px;height:416px;background:#a0a0a0;"></div>
<div class="a" style="left:1321px;top:183px;width:1px;height:439px;background:#a0a0a0;"></div>
<div class="a" style="left:1322px;top:183px;width:20px;height:439px;background:#fff;"></div>
<div class="a" style="left:1326px;top:184px;width:15px;height:437px;background:#f0f0f0;"></div>
<div class="a" style="left:1326px;top:200px;width:15px;height:382px;background:#cdcdcd;"></div>
<svg class="a" style="left:1326px;top:184px" width="15" height="16"><path d="M4 10.5 L7.5 7 L11 10.5" stroke="#555" stroke-width="2" fill="none" stroke-linecap="square"/></svg>
<svg class="a" style="left:1326px;top:605px" width="15" height="16"><path d="M4 7 L7.5 10.5 L11 7" stroke="#555" stroke-width="2" fill="none" stroke-linecap="square"/></svg>
<div class="btn" style="left:270px;top:667px;width:73px;height:27px"></div>
<div class="btn" style="left:353px;top:667px;width:73px;height:27px"></div>
<div class="btn" style="left:520px;top:667px;width:73px;height:27px"></div>
<div class="btn" style="left:601px;top:667px;width:73px;height:27px"></div>
<svg class="a" style="left:0;top:0" width="1366" height="725"><path d="M306.1 678.2 L300.90000000000003 681.5 L306.1 684.8" stroke="#303030" stroke-width="1.1" fill="none"/><path d="M312.3 678.2 L307.1 681.5 L312.3 684.8" stroke="#303030" stroke-width="1.1" fill="none"/><path d="M392.1 678.2 L386.90000000000003 681.5 L392.1 684.8" stroke="#303030" stroke-width="1.1" fill="none"/><path d="M553.1 678.2 L558.3000000000001 681.5 L553.1 684.8" stroke="#303030" stroke-width="1.1" fill="none"/><path d="M631.9 678.2 L637.1 681.5 L631.9 684.8" stroke="#303030" stroke-width="1.1" fill="none"/><path d="M637.9 678.2 L643.1 681.5 L637.9 684.8" stroke="#303030" stroke-width="1.1" fill="none"/></svg>
<div class="a" style="left:433px;top:666px;width:80px;height:29px;background:#fff;border:1px solid #c0c0c0"></div>
<div class="a" style="left:433px;top:670px;width:64px;text-align:center;font-family:'Liberation Serif',serif;font-weight:bold;font-size:16.5px;color:#000;line-height:20px">1</div>
<div class="a" style="left:497px;top:668px;width:14px;height:12px;background:#f0f0f0;border:1px solid #b4b4b4"></div>
<div class="a" style="left:497px;top:679px;width:14px;height:13px;background:#f0f0f0;border:1px solid #b4b4b4"></div>
<svg class="a" style="left:501px;top:672px" width="6" height="4"><path d="M3 0L6 3.5H0Z" fill="#000"/></svg>
<svg class="a" style="left:501px;top:684px" width="6" height="4"><path d="M0 0H6L3 3.5Z" fill="#000"/></svg>
<div class="a" style="left:726px;top:665px;width:80px;height:29px;background:#fff;border:1px solid #c0c0c0"></div>
<div class="a" style="left:726px;top:669px;width:64px;text-align:center;font-family:'Liberation Serif',serif;font-weight:bold;font-size:16.5px;color:#000;line-height:20px">20</div>
<div class="a" style="left:790px;top:667px;width:14px;height:12px;background:#f0f0f0;border:1px solid #b4b4b4"></div>
<div class="a" style="left:790px;top:678px;width:14px;height:13px;background:#f0f0f0;border:1px solid #b4b4b4"></div>
<svg class="a" style="left:794px;top:671px" width="6" height="4"><path d="M3 0L6 3.5H0Z" fill="#000"/></svg>
<svg class="a" style="left:794px;top:683px" width="6" height="4"><path d="M0 0H6L3 3.5Z" fill="#000"/></svg>
</body></html>
